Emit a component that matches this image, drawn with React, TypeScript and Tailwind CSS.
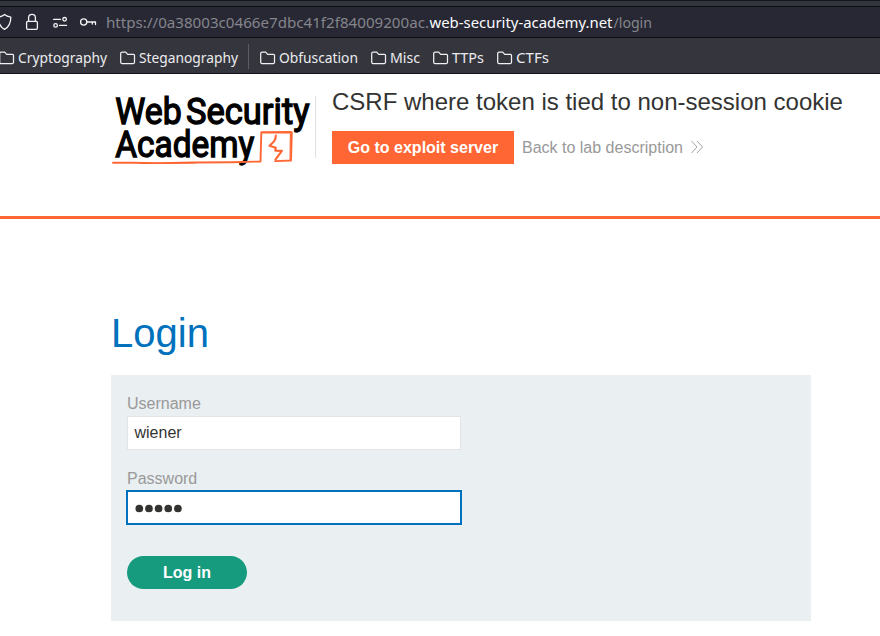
import React from "react";

function FolderIcon() {
  return (
    <svg width="16" height="16" viewBox="0 0 16 16" fill="none" stroke="#f0f0f2" strokeWidth="1.25" strokeLinejoin="round" className="shrink-0">
      <path d="M2.2 2.1h3.5l2 2.2h5.800a1 1 0 0 1 1 1v7a1.2 1.2 0 0 1-1.2 1.2H1.9a1.2 1.2 0 0 1-1.2-1.2V3.5a1.4 1.4 0 0 1 1.5-1.4z" />
    </svg>
  );
}

function Bookmark({ label, length }: { label: string; length: number }) {
  return (
    <div className="flex shrink-0 items-center gap-[3px]">
      <FolderIcon />
      <svg width={length} height="24" className="overflow-visible">
        <text x="0" y="17" textLength={length} lengthAdjust="spacingAndGlyphs" fill="#ececef" fontSize="15" fontFamily="'Noto Sans', sans-serif">{label}</text>
      </svg>
    </div>
  );
}

function AddressBar() {
  return (
    <div className="flex h-[32px] items-center border-y border-[#0d0d12] bg-[#272834]">
      <svg width="106" height="30" viewBox="0 7 106 30" fill="none" stroke="#f4f4f6" strokeWidth="1.3" strokeLinecap="round" strokeLinejoin="round" className="shrink-0">
        <path d="M4.5 14.6c2 1.6 4 2.2 6.3 2.6 0 5-1.4 9.5-6.3 12.2C-.4 26.7-1.800 22.200-1.800 17.200.5 16.800 2.500 16.200 4.500 14.600z" />
        <rect x="26.600" y="21.300" width="10.800" height="8" rx="1.200" />
        <path d="M28.600 21v-3.200a3.400 3.400 0 0 1 6.800 0V21" />
        <path d="M53.500 19.300h7M59.500 25.400h7" />
        <circle cx="64.600" cy="19.300" r="1.800" />
        <circle cx="55.600" cy="25.400" r="1.800" />
        <circle cx="83.700" cy="22" r="3.100" />
        <path d="M87 22h8.500v2.500M92.300 22v2" />
      </svg>
      <svg width="560" height="30" className="overflow-visible" fontSize="15.200" fontFamily="'Noto Sans', sans-serif">
        <text x="0" y="21" textLength="323" lengthAdjust="spacingAndGlyphs" fill="#85858b">https://0a38003c0466e7dbc41f2f84009200ac.</text>
        <text x="323.500" y="21" textLength="183" lengthAdjust="spacingAndGlyphs" fill="#fbfbfe">web-security-academy.net</text>
        <text x="507.500" y="21" textLength="38.500" lengthAdjust="spacingAndGlyphs" fill="#85858b">/login</text>
      </svg>
    </div>
  );
}

function Logo() {
  return (
    <svg width="204" height="76" viewBox="111 94 204 76" className="shrink-0 overflow-visible" aria-label="Web Security Academy">
      <g fill="#000" stroke="#000" strokeWidth="1.350" fontFamily="Roboto, sans-serif" fontWeight="400" fontSize="37">
        <text x="115.300" y="124.200" textLength="66.500" lengthAdjust="spacingAndGlyphs">Web</text>
        <text x="186" y="124.200" textLength="123.500" lengthAdjust="spacingAndGlyphs">Security</text>
        <text x="115.300" y="157" textLength="139" lengthAdjust="spacingAndGlyphs">Academy</text>
      </g>
      <g fill="none" stroke="#ff6633" strokeLinecap="round" strokeLinejoin="round">
        <path d="M113 162.700l18 .1 28 .3 35-.6 38-.3 28.500-.7.800-29h30.500l-.8 28-15.800.6" strokeWidth="1.900" />
        <path d="M261.500 132l29.500-.4M290.400 134l-.3 25.500M140 163.500l55-.6" strokeWidth="1.200" />
        <path d="M275.800 135.600c-.1 4-1 5.500-6.300 10.200l6.300 1.900-.5 2.900 6.600.3-6.500 8.700" strokeWidth="2.100" />
      </g>
    </svg>
  );
}

export default function App() {
  return (
    <div className="h-[636px] w-[880px] overflow-hidden bg-white font-['Liberation_Sans',Arial,sans-serif] text-base text-[#333332]">
      <div className="h-[6px] border-t border-[#15161c] bg-[#33353c]" />
      <AddressBar />
      <nav className="flex h-[36px] border-b border-[#111217] bg-[#35363d]">
        <div className="-ml-px flex items-center gap-[13px] pt-[4px]">
          <Bookmark label="Cryptography" length={89} />
          <Bookmark label="Steganography" length={99} />
          <div className="-ml-[3px] -mr-[2px] -mt-[2px] h-[25px] w-px bg-[#5b5c63]" />
          <Bookmark label="Obfuscation" length={79} />
          <Bookmark label="Misc" length={30} />
          <Bookmark label="TTPs" length={32} />
          <Bookmark label="CTFs" length={33} />
        </div>
      </nav>

      <header className="flex h-[145px] border-b-[3px] border-[#ff6633] pl-[111px] pt-[20px]">
        <Logo />
        <div className="mt-[2px] h-[62px] w-px bg-[#e0e0e2]" />
        <div className="-mt-[7px] ml-[16px]">
          <h2 className="text-[24px] leading-[30px]">CSRF where token is tied to non-session cookie</h2>
          <div className="mt-[14px] flex items-center">
            <button className="h-[33px] w-[182px] bg-[#ff6633] font-bold text-white">Go to exploit server</button>
            <a className="ml-[8px] flex items-center text-[#999]">
              Back to lab description
              <svg width="14" height="14" viewBox="0 0 14 14" fill="none" stroke="#999" strokeWidth="0.900" className="-mt-px ml-[7.500px]">
                <path d="M1.500 1l5.500 6-5.500 6M7 1l5.500 6L7 13" />
              </svg>
            </a>
          </div>
        </div>
      </header>

      <main className="pl-[111px] pt-[90px]">
        <h1 className="text-[40px] leading-[48px] text-[#0071bc]">Login</h1>
        <form className="mt-[18px] h-[246px] w-[700px] bg-[#eaeff2] pl-[16px] pt-[19px]">
          <label className="block h-[22px] leading-[20px] text-[#999]">Username</label>
          <div className="h-[34px] w-[334px] border border-[#e4e4e4] bg-white px-[6.500px] leading-[32px]">wiener</div>
          <label className="mt-[19px] block h-[20px] leading-[20px] text-[#999]">Password</label>
          <div className="-ml-px mt-px flex h-[35px] w-[336px] items-center border-2 border-[#0071bc] bg-white pl-[7px]">
            <svg width="48" height="31" viewBox="0 0 48 31" fill="#333332">
              {[0, 1, 2, 3, 4].map((dot) => (
                <circle key={dot} cx={4.3 + dot * 9.65} cy="16.500" r="3.850" />
              ))}
            </svg>
          </div>
          <button type="button" className="mt-[31px] h-[33px] w-[120px] rounded-full bg-[#169b7f] font-bold text-white">Log in</button>
        </form>
      </main>
    </div>
  );
}
